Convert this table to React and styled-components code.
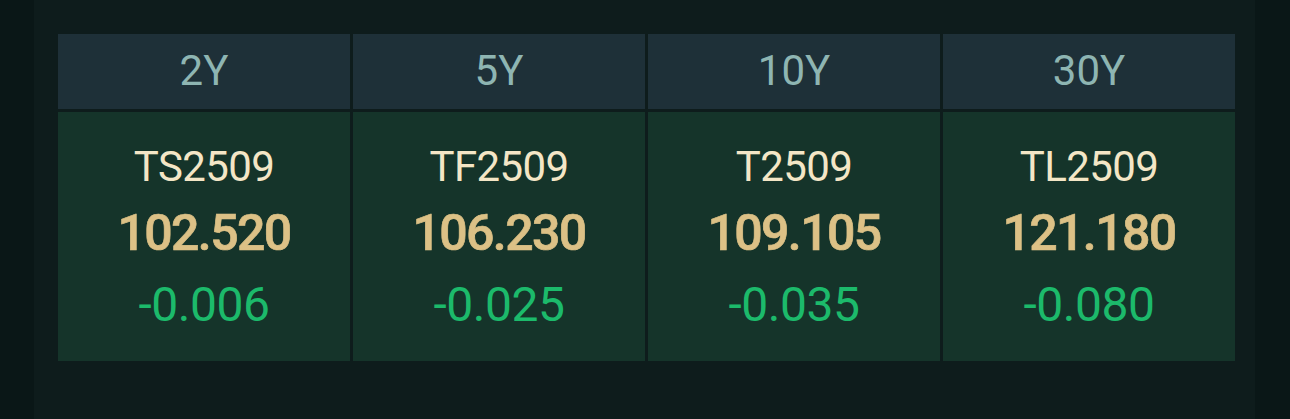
import React from 'react';
import styled, { createGlobalStyle } from 'styled-components';

const GlobalStyle = createGlobalStyle`
  html, body {
    margin: 0;
    padding: 0;
    background: #0a1717;
    font-family: Roboto, "Noto Sans", sans-serif;
  }
`

const StyledPage = styled.div`
  width: 1290px;
  height: 419px;
  display: flex;
  padding-left: 34px;
  box-sizing: border-box;
  background: #0a1717;
`

const StyledPanel = styled.div`
  width: 1221px;
  height: 419px;
  box-sizing: border-box;
  padding: 34px 20px 0 24px;
  background: #0e1c1c;
`

const StyledGrid = styled.div`
  display: grid;
  grid-template-columns: repeat(4, 292px);
  grid-template-rows: 75px 249px;
  gap: 3px;
`

const StyledHead = styled.div`
  display: flex;
  align-items: center;
  justify-content: center;
  background: #1e3038;
  color: #8eb5b2;
  font-size: 42px;
  padding-bottom: 2px;
  box-sizing: border-box;
`

const StyledCell = styled.div`
  display: flex;
  flex-direction: column;
  align-items: center;
  padding-top: 27px;
  box-sizing: border-box;
  background: #15342a;
`

const StyledName = styled.div`
  font-size: 42px;
  line-height: 56px;
  letter-spacing: -0.6px;
  color: #f4e6c6;
`

const StyledPrice = styled.div`
  font-size: 50px;
  line-height: 77px;
  font-weight: 500;
  letter-spacing: -1.6px;
  color: #dcc186;
  -webkit-text-stroke: 0.7px #dcc186;
`

const StyledChange = styled.div`
  font-size: 48px;
  line-height: 66px;
  letter-spacing: -0.5px;
  color: ${p => (p.$up ? '#e0504a' : '#1cba6b')};
`

const rows = [
  { tenor: '2Y', name: 'TS2509', price: '102.520', change: '-0.006' },
  { tenor: '5Y', name: 'TF2509', price: '106.230', change: '-0.025' },
  { tenor: '10Y', name: 'T2509', price: '109.105', change: '-0.035' },
  { tenor: '30Y', name: 'TL2509', price: '121.180', change: '-0.080' },
];

const App = () => {
  return (
    <StyledPage>
      <GlobalStyle />
      <StyledPanel>
        <StyledGrid>
          {rows.map(r => (
            <StyledHead key={r.tenor}>{r.tenor}</StyledHead>
          ))}
          {rows.map(r => (
            <StyledCell key={r.name}>
              <StyledName>{r.name}</StyledName>
              <StyledPrice>{r.price}</StyledPrice>
              <StyledChange $up={!r.change.startsWith('-')}>{r.change}</StyledChange>
            </StyledCell>
          ))}
        </StyledGrid>
      </StyledPanel>
    </StyledPage>
  );
}

export default App;
